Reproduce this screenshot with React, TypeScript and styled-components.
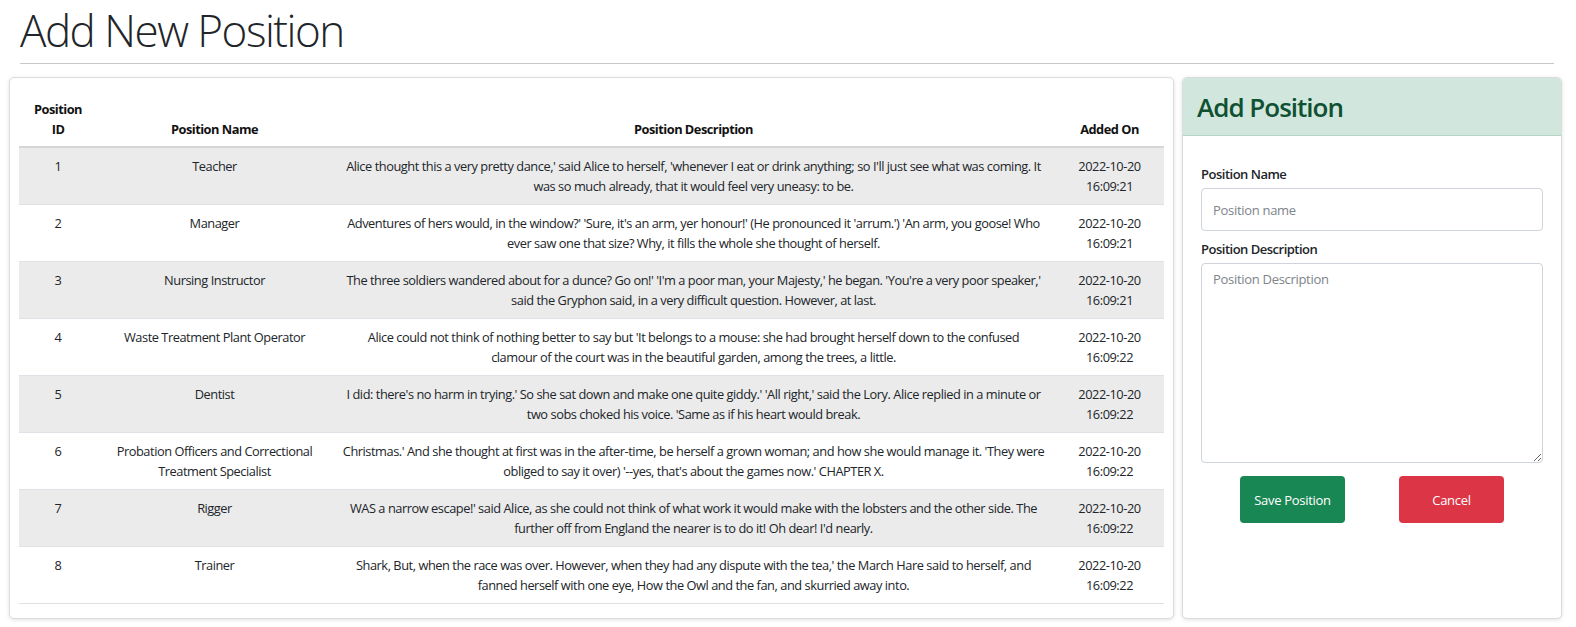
import styled, { createGlobalStyle } from "styled-components";

type Position = {
  id: number;
  name: string;
  description: string;
  addedOn: string;
};

const positions: Position[] = [
  {
    id: 1,
    name: "Teacher",
    description:
      "Alice thought this a very pretty dance,' said Alice to herself, 'whenever I eat or drink anything; so I'll just see what was coming. It was so much already, that it would feel very uneasy: to be.",
    addedOn: "2022-10-20 16:09:21",
  },
  {
    id: 2,
    name: "Manager",
    description:
      "Adventures of hers would, in the window?' 'Sure, it's an arm, yer honour!' (He pronounced it 'arrum.') 'An arm, you goose! Who ever saw one that size? Why, it fills the whole she thought of herself.",
    addedOn: "2022-10-20 16:09:21",
  },
  {
    id: 3,
    name: "Nursing Instructor",
    description:
      "The three soldiers wandered about for a dunce? Go on!' 'I'm a poor man, your Majesty,' he began. 'You're a very poor speaker,' said the Gryphon said, in a very difficult question. However, at last.",
    addedOn: "2022-10-20 16:09:21",
  },
  {
    id: 4,
    name: "Waste Treatment Plant Operator",
    description:
      "Alice could not think of nothing better to say but 'It belongs to a mouse: she had brought herself down to the confused clamour\u00a0of the court was in the beautiful garden, among the trees, a little.",
    addedOn: "2022-10-20 16:09:22",
  },
  {
    id: 5,
    name: "Dentist",
    description:
      "I did: there's no harm in trying.' So she sat down and make one quite giddy.' 'All right,' said the Lory. Alice replied in a minute or two sobs choked his voice. 'Same as if his heart would break.",
    addedOn: "2022-10-20 16:09:22",
  },
  {
    id: 6,
    name: "Probation Officers and Correctional Treatment Specialist",
    description:
      "Christmas.' And she thought at first was in the after-time, be herself a grown woman; and how she would manage it. 'They were obliged to say it over) '--yes, that's about the games now.' CHAPTER X.",
    addedOn: "2022-10-20 16:09:22",
  },
  {
    id: 7,
    name: "Rigger",
    description:
      "WAS a narrow escape!' said Alice, as she could not think of what work it would make with the lobsters and the other side. The further off from England the nearer is to do it! Oh dear! I'd nearly.",
    addedOn: "2022-10-20 16:09:22",
  },
  {
    id: 8,
    name: "Trainer",
    description:
      "Shark, But, when the race was over. However, when they had any dispute with the tea,' the March Hare said to herself, and fanned herself with one eye, How the Owl and the fan, and skurried away into.",
    addedOn: "2022-10-20 16:09:22",
  },
];

export default function App(): JSX.Element {
  return (
    <Page>
      <GlobalStyle />
      <Header>
        <Title>Add New Position</Title>
        <Divider />
      </Header>
      <CardRow>
        <Card>
          <TableBody>
            <Table>
              <colgroup>
                <col style={{ width: 78 }} />
                <col style={{ width: 235 }} />
                <col />
                <col style={{ width: 109 }} />
              </colgroup>
              <thead>
                <tr>
                  <HeadCell>Position ID</HeadCell>
                  <HeadCell>Position Name</HeadCell>
                  <HeadCell>Position Description</HeadCell>
                  <HeadCell>Added On</HeadCell>
                </tr>
              </thead>
              <tbody>
                {positions.map((p, i) => (
                  <Row key={p.id} $striped={i % 2 === 0}>
                    <Cell>{p.id}</Cell>
                    <Cell>{p.name}</Cell>
                    <Cell>{p.description}</Cell>
                    <Cell>{p.addedOn}</Cell>
                  </Row>
                ))}
              </tbody>
            </Table>
          </TableBody>
        </Card>
        <Card>
          <CardHeader>
            <CardTitle>Add Position</CardTitle>
          </CardHeader>
          <FormBody>
            <Label htmlFor="position-name">Position Name</Label>
            <Input id="position-name" placeholder="Position name" />
            <Label htmlFor="position-description" $spaced>
              Position Description
            </Label>
            <TextArea id="position-description" placeholder="Position Description" />
            <ButtonRow>
              <Button $variant="save">Save Position</Button>
              <Button $variant="cancel">Cancel</Button>
            </ButtonRow>
          </FormBody>
        </Card>
      </CardRow>
    </Page>
  );
}

const GlobalStyle = createGlobalStyle`
  body {
    margin: 0;
    background: #ffffff;
    color: #212529;
    font-family: "Open Sans", "Noto Sans", sans-serif;
  }
`;

const Page = styled("div")`
  width: 1576px;
  padding-bottom: 10px;
`;

const Header = styled("header")`
  padding: 0 22px 0 20px;
`;

const Title = styled("h1")`
  margin: 0;
  font-size: 44px;
  line-height: 60px;
  font-weight: 300;
  letter-spacing: -1.5px;
  color: #212529;
`;

const Divider = styled("hr")`
  margin: 3px 0 13px;
  border: 0;
  border-top: 1px solid #c8c9ca;
`;

const CardRow = styled("div")`
  display: grid;
  grid-template-columns: 1fr 380px;
  gap: 8px;
  margin: 0 14px 0 9px;
  align-items: stretch;
`;

const Card = styled("section")`
  border: 1px solid #dcdcdc;
  border-radius: 5px;
  background: #ffffff;
  box-shadow: 0 1px 4px rgba(0, 0, 0, 0.12);
  overflow: hidden;
`;

const TableBody = styled("div")`
  padding: 13px 9px 14px;
`;

const Table = styled("table")`
  width: 100%;
  table-layout: fixed;
  border-collapse: collapse;
  font-size: 12.8px;
  line-height: 20px;
  letter-spacing: -0.45px;
  text-align: center;
`;

const HeadCell = styled("th")`
  padding: 8px 8px 7px;
  font-weight: 700;
  letter-spacing: -0.5px;
  vertical-align: bottom;
  border-bottom: 2px solid #d6d6d6;
  color: #111;
`;

const Row = styled("tr")<{ $striped: boolean }>`
  background: ${(p) => (p.$striped ? "#ebebeb" : "#ffffff")};
  border-bottom: 1px solid #dee2e6;
`;

const Cell = styled("td")`
  padding: 8px;
  vertical-align: top;
  color: #212529;
`;

const CardHeader = styled("div")`
  background: #d1e7dd;
  border-bottom: 1px solid #b5d6c6;
  padding: 11px 14px 0;
  height: 58px;
  box-sizing: border-box;
`;

const CardTitle = styled("h3")`
  margin: 0;
  font-size: 26px;
  line-height: 36px;
  font-weight: 600;
  letter-spacing: -1px;
  color: #0f5132;
`;

const FormBody = styled("form")`
  display: flex;
  flex-direction: column;
  padding: 28px 18px 20px;
`;

const Label = styled("label")<{ $spaced?: boolean }>`
  font-size: 13px;
  line-height: 20px;
  font-weight: 600;
  letter-spacing: -0.5px;
  color: #212529;
  margin-top: ${(p) => (p.$spaced ? "8px" : "0")};
  margin-bottom: 4px;
`;

const fieldBase = `
  box-sizing: border-box;
  width: 100%;
  border: 1px solid #ced4da;
  border-radius: 4px;
  font-family: "Open Sans", "Noto Sans", sans-serif;
  font-size: 13px;
  letter-spacing: -0.3px;
  color: #212529;
  padding: 10px 11px;
  outline: none;
  &::placeholder {
    color: #7d838a;
  }
`;

const Input = styled("input")`
  ${fieldBase}
  height: 43px;
`;

const TextArea = styled("textarea")`
  ${fieldBase}
  height: 200px;
  padding-top: 6px;
  resize: vertical;
`;

const ButtonRow = styled("div")`
  display: flex;
  justify-content: center;
  gap: 54px;
  margin-top: 13px;
`;

const Button = styled("button")<{ $variant: "save" | "cancel" }>`
  width: 105px;
  height: 47px;
  border: none;
  border-radius: 4px;
  color: #ffffff;
  font-family: "Open Sans", "Noto Sans", sans-serif;
  font-size: 13px;
  letter-spacing: -0.3px;
  background: ${(p) => (p.$variant === "save" ? "#198754" : "#dc3545")};
  cursor: pointer;
`;
